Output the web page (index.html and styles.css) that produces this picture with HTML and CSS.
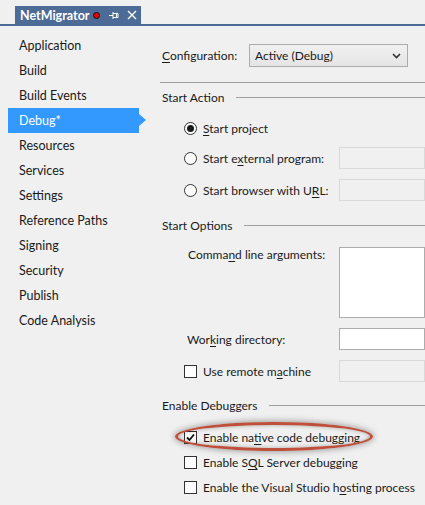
FILE: index.html
```html
<!DOCTYPE html>
<html>
<head>
<meta charset="utf-8">
<link rel="stylesheet" href="styles.css">
</head>
<body>
<div class="tabbar">
  <div class="tab">
    <span class="tab-title">NetMigrator</span>
    <span class="dirty-dot"></span>
    <svg class="pin" width="10" height="9" viewBox="0 0 10 9"><path d="M0 4.5H4M4 1V8M4 2.5H9V6.5H4M7.5 2.5V6.5" stroke="#fff" stroke-width="1" fill="none"/></svg>
    <svg class="close" width="10" height="10" viewBox="0 0 10 10"><path d="M1 1L9 9M9 1L1 9" stroke="#fff" stroke-width="1.4" fill="none"/></svg>
  </div>
</div>
<div class="main">
  <nav class="sidebar">
    <div class="nav-item">Application</div>
    <div class="nav-item">Build</div>
    <div class="nav-item">Build Events</div>
    <div class="nav-item active">Debug*</div>
    <div class="nav-item">Resources</div>
    <div class="nav-item">Services</div>
    <div class="nav-item">Settings</div>
    <div class="nav-item">Reference Paths</div>
    <div class="nav-item">Signing</div>
    <div class="nav-item">Security</div>
    <div class="nav-item">Publish</div>
    <div class="nav-item">Code Analysis</div>
  </nav>
  <section class="content">
    <div class="config-row">
      <span class="config-label"><u>C</u>onfiguration:</span>
      <div class="select"><span>Active (Debug)</span>
        <svg width="9" height="6" viewBox="0 0 9 6"><path d="M1 1L4.5 4.5L8 1" stroke="#333" stroke-width="1.6" fill="none"/></svg>
      </div>
    </div>
    <div class="rule"></div>

    <div class="section-head sh-action"><span>Start Action</span><i></i></div>
    <div class="opt-row r1"><span class="radio checked"></span><span class="opt-text"><u>S</u>tart project</span></div>
    <div class="opt-row r2"><span class="radio"></span><span class="opt-text">Start e<u>x</u>ternal program:</span><span class="field disabled"></span></div>
    <div class="opt-row r3"><span class="radio"></span><span class="opt-text">Start browser with U<u>R</u>L:</span><span class="field disabled"></span></div>

    <div class="section-head sh-options"><span>Start Options</span><i></i></div>
    <div class="text-row cmd"><span class="field-label">Comma<u>n</u>d line arguments:</span><span class="field area"></span></div>
    <div class="text-row wd"><span class="field-label">Wor<u>k</u>ing directory:</span><span class="field"></span></div>
    <div class="opt-row remote"><span class="check"></span><span class="opt-text">Use remote m<u>a</u>chine</span><span class="field disabled"></span></div>

    <div class="section-head sh-debug"><span>Enable Debuggers</span><i></i></div>
    <div class="dbg-list">
      <div class="dbg-row highlighted"><span class="check checked"><svg width="11" height="11" viewBox="0 0 11 11"><path d="M2 5.5L4.5 8L9 2.5" stroke="#111" stroke-width="1.8" fill="none"/></svg></span><span class="opt-text">Enable na<u>t</u>ive code debugging</span><span class="ring"></span></div>
      <div class="dbg-row"><span class="check"></span><span class="opt-text">Enable S<u>Q</u>L Server debugging</span></div>
      <div class="dbg-row"><span class="check"></span><span class="opt-text">Enable the Visual Studio h<u>o</u>sting process</span></div>
    </div>
  </section>
</div>
</body>
</html>
```

FILE: styles.css
```css
html, body {
  margin: 0;
  padding: 0;
  background: #f0f0f0;
  width: 425px;
  height: 505px;
  overflow: hidden;
  font-family: "Lato", "Noto Sans", sans-serif;
  font-size: 12px;
  color: #1a1a1a;
}
u { text-decoration: underline; text-underline-offset: 2px; }

.tabbar {
  height: 24px;
  border-bottom: 2px solid #4d6b97;
  padding-left: 15px;
  display: flex;
  align-items: flex-end;
}
.tab {
  width: 126px;
  height: 18px;
  background: #4d6b97;
  display: flex;
  align-items: center;
  padding-left: 5px;
  box-sizing: border-box;
}
.tab-title {
  color: #fff;
  font-weight: bold;
  font-size: 12.5px;
}
.dirty-dot {
  width: 5px;
  height: 5px;
  border-radius: 50%;
  background: #e8000b;
  border: 1px solid #111;
  margin-left: 4px;
}
.pin { margin-left: 9px; }
.close { margin-left: 8px; }

.main { display: flex; }
.sidebar {
  width: 148px;
  padding-top: 7px;
  flex: none;
  font-size: 12.5px;
}
.nav-item {
  height: 25px;
  line-height: 25px;
  margin-left: 8px;
  margin-right: 9px;
  padding-left: 11px;
  position: relative;
}
.nav-item.active {
  background: #3399ff;
  color: #fff;
}
.nav-item.active::after {
  content: "";
  position: absolute;
  right: -7px;
  top: 6px;
  border-left: 7px solid #3399ff;
  border-top: 6px solid transparent;
  border-bottom: 6px solid transparent;
}

.content {
  flex: 1;
  padding-top: 18px;
  padding-left: 12px;
  min-width: 0;
}
.config-row {
  display: flex;
  align-items: center;
  height: 23px;
}
.config-label { width: 89px; padding-left: 2px; box-sizing: border-box; }
.select {
  width: 159px;
  height: 23px;
  box-sizing: border-box;
  border: 1px solid #acacac;
  background: linear-gradient(#f0f0f0, #e5e5e5);
  display: flex;
  align-items: center;
  justify-content: space-between;
  padding: 0 6px 0 5px;
}
.rule {
  margin-top: 15px;
  height: 1px;
  background: #a0a0a0;
}
.section-head {
  display: flex;
  align-items: center;
  height: 16px;
  padding-left: 2px;
}
.section-head i {
  flex: 1;
  height: 1px;
  background: #a0a0a0;
  margin-left: 12px;
}
.sh-action { margin-top: 6px; }
.sh-options { margin-top: 16px; }
.sh-debug { margin-top: 15px; }

.opt-row {
  display: flex;
  align-items: center;
  height: 22px;
  padding-left: 24px;
}
.r1 { margin-top: 12px; }
.r2 { margin-top: 8px; }
.r3 { margin-top: 10px; }
.remote { margin-top: 10px; }

.radio {
  width: 13px;
  height: 13px;
  box-sizing: border-box;
  border: 1px solid #333;
  border-radius: 50%;
  background: #fff;
  display: flex;
  align-items: center;
  justify-content: center;
  flex: none;
}
.radio.checked::after {
  content: "";
  width: 7px;
  height: 7px;
  border-radius: 50%;
  background: #1a1a1a;
}
.opt-text { margin-left: 6px; white-space: nowrap; }
.field {
  margin-left: auto;
  width: 86px;
  height: 22px;
  box-sizing: border-box;
  border: 1px solid #acacac;
  background: #fff;
  flex: none;
}
.field.disabled {
  border-color: #d9d9d9;
  background: #f0f0f0;
}
.text-row {
  display: flex;
  padding-left: 28px;
}
.cmd { margin-top: 14px; }
.area { height: 71px; }
.wd { margin-top: 10px; align-items: center; }
.wd .field-label { margin-left: -1px; }

.check {
  width: 13px;
  height: 13px;
  box-sizing: border-box;
  border: 1px solid #333;
  background: #fff;
  flex: none;
  display: flex;
  align-items: center;
  justify-content: center;
}
.dbg-list { margin-top: 12px; }
.dbg-row {
  height: 25px;
  display: flex;
  align-items: center;
  padding-left: 24px;
  position: relative;
}
.ring {
  position: absolute;
  left: 15px;
  top: -3px;
  width: 198px;
  height: 29px;
  box-sizing: border-box;
  border: 3px solid #bd4f3b;
  border-radius: 50%;
  box-shadow: 0 0 6px 1px rgba(0,0,0,0.35), inset 0 0 4px rgba(0,0,0,0.3);
}
```
